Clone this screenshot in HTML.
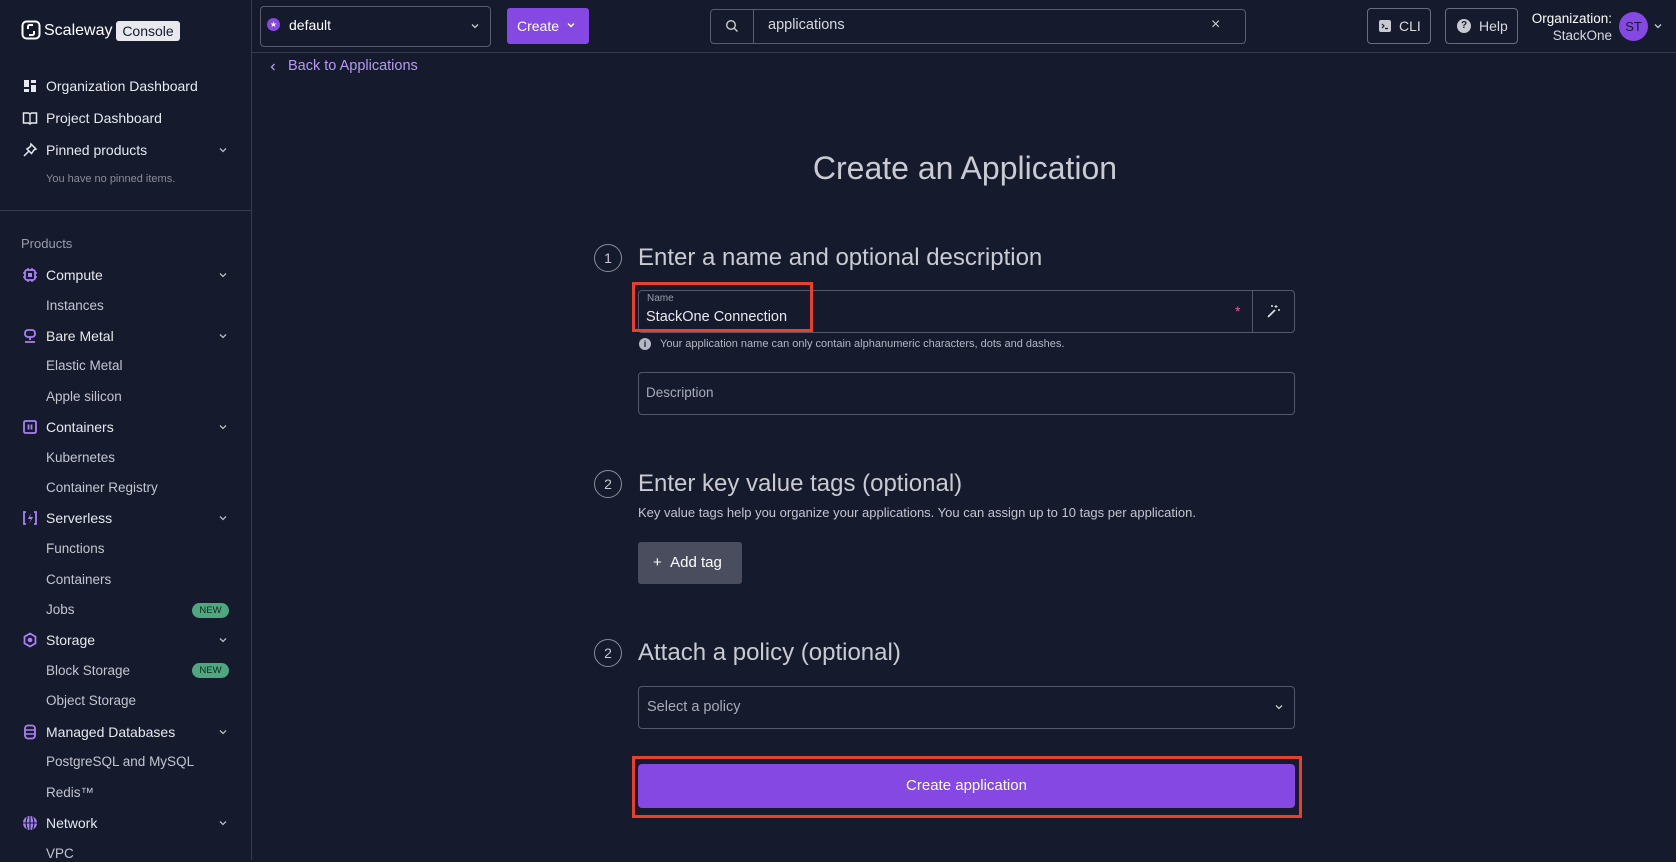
<!DOCTYPE html>
<html><head><meta charset="utf-8"><style>
*{box-sizing:border-box;margin:0;padding:0}
body{width:1676px;height:860px;background:#151a2d;font-family:"Liberation Sans",sans-serif;color:#e4e5ea;position:relative;overflow:hidden}
.a{position:absolute}
.side{left:0;top:0;width:252px;height:860px;border-right:1px solid #383b4f}
.ni{position:absolute;left:46px;font-size:14px;color:#e8e9ee;line-height:16px}
.sub{position:absolute;left:46px;font-size:13.5px;color:#c3c5cf;line-height:16px}
.ic{position:absolute;left:22px;width:16px;height:16px}
.chev{position:absolute;left:218px;width:10px;height:10px}
.new{position:absolute;left:192px;width:37px;height:15px;border-radius:8px;background:#4fa77f;color:#0f2a1e;font-size:9.5px;text-align:center;line-height:15px}
.box{position:absolute;border:1px solid #55586b;border-radius:4px}
.step{position:absolute;left:594px;width:28px;height:28px;border:1px solid #8a8c99;border-radius:50%;font-size:14px;color:#c8c9d1;text-align:center;line-height:26px}
.h{position:absolute;left:638px;font-size:24px;color:#c9cad2;line-height:26px;font-weight:300}
</style></head><body>
<div class="a side">
  <svg class="a" style="left:21px;top:20px" width="20" height="20" viewBox="0 0 20 20"><rect x="1.5" y="1.5" width="17" height="17" rx="4" fill="none" stroke="#fff" stroke-width="2"/><path d="M12 5H8.5a1.5 1.5 0 0 0-1.5 1.5V9M8 15h3.5a1.5 1.5 0 0 0 1.5-1.5V11" fill="none" stroke="#fff" stroke-width="2"/></svg>
  <div class="a" style="left:44px;top:21px;font-size:16px;color:#fff;line-height:20px">Scaleway</div>
  <div class="a" style="left:116px;top:21px;width:64px;background:#e8e9ee;color:#151a2d;border-radius:3px;font-size:14px;text-align:center;line-height:20px">Console</div>

  <svg class="ic" style="top:78px" viewBox="0 0 16 16"><rect x="2" y="2" width="5" height="7" fill="#e8e9ee"/><rect x="2" y="11" width="5" height="3" fill="#e8e9ee"/><rect x="9" y="2" width="5" height="3" fill="#e8e9ee"/><rect x="9" y="7" width="5" height="7" fill="#e8e9ee"/></svg>
  <div class="ni" style="top:78px">Organization Dashboard</div>
  <svg class="ic" style="top:110px" viewBox="0 0 16 16"><path d="M1.5 3h5l1.5 1 1.5-1h5v10h-5L8 14l-1.5-1h-5z" fill="none" stroke="#e8e9ee" stroke-width="1.5"/><path d="M8 4v10" stroke="#e8e9ee" stroke-width="1.3"/></svg>
  <div class="ni" style="top:110px">Project Dashboard</div>
  <svg class="ic" style="top:142px" viewBox="0 0 16 16"><path d="M9 2l5 5-2 1-2.5 3.5L5 7l3.5-2.5zM6.5 9.5L2 14" fill="none" stroke="#e8e9ee" stroke-width="1.5"/></svg>
  <div class="ni" style="top:142px">Pinned products</div>
  <svg class="chev" style="top:145px" viewBox="0 0 10 10"><path d="M2 3.5l3 3 3-3" fill="none" stroke="#bbb" stroke-width="1.3"/></svg>
  <div class="a" style="left:46px;top:173px;font-size:11px;color:#8a8c99">You have no pinned items.</div>
  <div class="a" style="left:0;top:210px;width:252px;border-top:1px solid #383b4f"></div>
  <div class="a" style="left:21px;top:236px;font-size:13px;color:#9b9dab">Products</div>

  <svg class="ic" style="top:267px" viewBox="0 0 16 16"><rect x="3" y="3" width="10" height="10" rx="2" fill="none" stroke="#a881f5" stroke-width="1.8"/><rect x="6" y="6" width="4" height="4" fill="#a881f5"/><path d="M6 1v2M10 1v2M6 13v2M10 13v2M1 6h2M1 10h2M13 6h2M13 10h2" stroke="#a881f5" stroke-width="1.5"/></svg>
  <div class="ni" style="top:267px">Compute</div>
  <svg class="chev" style="top:270px" viewBox="0 0 10 10"><path d="M2 3.5l3 3 3-3" fill="none" stroke="#bbb" stroke-width="1.3"/></svg>
  <div class="sub" style="top:298px">Instances</div>

  <svg class="ic" style="top:328px" viewBox="0 0 16 16"><rect x="3" y="2" width="10" height="7" rx="3" fill="none" stroke="#a881f5" stroke-width="1.8"/><path d="M8 9v3M3 14h10" stroke="#a881f5" stroke-width="1.8"/></svg>
  <div class="ni" style="top:328px">Bare Metal</div>
  <svg class="chev" style="top:331px" viewBox="0 0 10 10"><path d="M2 3.5l3 3 3-3" fill="none" stroke="#bbb" stroke-width="1.3"/></svg>
  <div class="sub" style="top:358px">Elastic Metal</div>
  <div class="sub" style="top:389px">Apple silicon</div>

  <svg class="ic" style="top:419px" viewBox="0 0 16 16"><rect x="2" y="2" width="12" height="12" rx="1.5" fill="none" stroke="#a881f5" stroke-width="1.8"/><path d="M6.5 5.5v5M9.5 5.5v5" stroke="#a881f5" stroke-width="1.8"/></svg>
  <div class="ni" style="top:419px">Containers</div>
  <svg class="chev" style="top:422px" viewBox="0 0 10 10"><path d="M2 3.5l3 3 3-3" fill="none" stroke="#bbb" stroke-width="1.3"/></svg>
  <div class="sub" style="top:450px">Kubernetes</div>
  <div class="sub" style="top:480px">Container Registry</div>

  <svg class="ic" style="top:510px" viewBox="0 0 16 16"><path d="M4 2H2v12h2M12 2h2v12h-2" fill="none" stroke="#a881f5" stroke-width="1.8"/><path d="M9 3L6 9h3l-2 5 4-7H8z" fill="#a881f5"/></svg>
  <div class="ni" style="top:510px">Serverless</div>
  <svg class="chev" style="top:513px" viewBox="0 0 10 10"><path d="M2 3.5l3 3 3-3" fill="none" stroke="#bbb" stroke-width="1.3"/></svg>
  <div class="sub" style="top:541px">Functions</div>
  <div class="sub" style="top:572px">Containers</div>
  <div class="sub" style="top:602px">Jobs</div>
  <div class="new" style="top:603px">NEW</div>

  <svg class="ic" style="top:632px" viewBox="0 0 16 16"><path d="M8 1.5l5.5 3.2v6.6L8 14.5l-5.5-3.2V4.7z" fill="none" stroke="#a881f5" stroke-width="1.8"/><circle cx="8" cy="8" r="2.3" fill="#a881f5"/></svg>
  <div class="ni" style="top:632px">Storage</div>
  <svg class="chev" style="top:635px" viewBox="0 0 10 10"><path d="M2 3.5l3 3 3-3" fill="none" stroke="#bbb" stroke-width="1.3"/></svg>
  <div class="sub" style="top:663px">Block Storage</div>
  <div class="new" style="top:663px">NEW</div>
  <div class="sub" style="top:693px">Object Storage</div>

  <svg class="ic" style="top:724px" viewBox="0 0 16 16"><rect x="3" y="1.5" width="10" height="13" rx="3" fill="none" stroke="#a881f5" stroke-width="1.8"/><path d="M3 6h10M3 10h10" stroke="#a881f5" stroke-width="1.5"/></svg>
  <div class="ni" style="top:724px">Managed Databases</div>
  <svg class="chev" style="top:727px" viewBox="0 0 10 10"><path d="M2 3.5l3 3 3-3" fill="none" stroke="#bbb" stroke-width="1.3"/></svg>
  <div class="sub" style="top:754px">PostgreSQL and MySQL</div>
  <div class="sub" style="top:785px">Redis™</div>

  <svg class="ic" style="top:815px" viewBox="0 0 16 16"><circle cx="8" cy="8" r="7" fill="#a881f5"/><path d="M1 8h14M8 1v14M5.5 1.8c-1.8 3.5-1.8 8.9 0 12.4M10.5 1.8c1.8 3.5 1.8 8.9 0 12.4" fill="none" stroke="#151a2d" stroke-width="1.1"/></svg>
  <div class="ni" style="top:815px">Network</div>
  <svg class="chev" style="top:818px" viewBox="0 0 10 10"><path d="M2 3.5l3 3 3-3" fill="none" stroke="#bbb" stroke-width="1.3"/></svg>
  <div class="sub" style="top:846px">VPC</div>
</div>

<!-- top bar -->
<div class="a" style="left:252px;top:52px;width:1424px;border-top:1px solid #383b4f"></div>
<div class="box" style="left:260px;top:6px;width:231px;height:41px;border-color:#5a5d70"></div>
<div class="a" style="left:267px;top:18px;width:13px;height:13px;border-radius:50%;background:#8548e3;color:#fff;font-size:8px;text-align:center;line-height:13px">★</div>
<div class="a" style="left:289px;top:17px;font-size:14px;color:#fff">default</div>
<svg class="a" style="left:470px;top:21px" width="10" height="10" viewBox="0 0 10 10"><path d="M2 3.5l3 3 3-3" fill="none" stroke="#ccc" stroke-width="1.3"/></svg>
<div class="a" style="left:507px;top:8px;width:82px;height:36px;background:#8548e3;border-radius:3px"></div>
<div class="a" style="left:517px;top:18px;font-size:14px;color:#fff">Create</div>
<svg class="a" style="left:566px;top:20px" width="10" height="10" viewBox="0 0 10 10"><path d="M2 3.5l3 3 3-3" fill="none" stroke="#fff" stroke-width="1.4"/></svg>
<div class="box" style="left:710px;top:9px;width:536px;height:35px;border-color:#5a5d70"></div>
<div class="a" style="left:753px;top:10px;height:33px;border-left:1px solid #5a5d70"></div>
<svg class="a" style="left:725px;top:19px" width="14" height="14" viewBox="0 0 14 14"><circle cx="6" cy="6" r="4.3" fill="none" stroke="#ccc" stroke-width="1.4"/><path d="M9.2 9.2L12.5 12.5" stroke="#ccc" stroke-width="1.4"/></svg>
<div class="a" style="left:768px;top:17px;font-size:14.5px;color:#d8d9df">applications</div>
<div class="a" style="left:1211px;top:16px;font-size:16px;color:#ccc">×</div>
<div class="box" style="left:1367px;top:8px;width:64px;height:36px;border-color:#6a6d80"></div>
<svg class="a" style="left:1379px;top:20px" width="12" height="12" viewBox="0 0 12 12"><rect width="12" height="12" rx="2" fill="#c8c9d1"/><path d="M3 4l2 2-2 2M6 8.5h3" stroke="#151a2d" stroke-width="1.2" fill="none"/></svg>
<div class="a" style="left:1399px;top:18px;font-size:14px;color:#d8d9df">CLI</div>
<div class="box" style="left:1445px;top:8px;width:73px;height:36px;border-color:#6a6d80"></div>
<div class="a" style="left:1457px;top:19px;width:14px;height:14px;border-radius:50%;background:#c8c9d1;color:#151a2d;font-size:10px;font-weight:bold;text-align:center;line-height:14px">?</div>
<div class="a" style="left:1479px;top:18px;font-size:14px;color:#d8d9df">Help</div>
<div class="a" style="left:1500px;top:10px;width:112px;text-align:right;font-size:13.5px;color:#fff;line-height:17px">Organization:<br><span style="color:#d8d9df">StackOne</span></div>
<div class="a" style="left:1619px;top:12px;width:29px;height:29px;border-radius:50%;background:#8548e3;color:#151a2d;font-size:13px;text-align:center;line-height:29px">ST</div>
<svg class="a" style="left:1653px;top:21px" width="10" height="10" viewBox="0 0 10 10"><path d="M2 3.5l3 3 3-3" fill="none" stroke="#ccc" stroke-width="1.3"/></svg>

<svg class="a" style="left:268px;top:62px" width="10" height="10" viewBox="0 0 10 10"><path d="M6.5 2L3.5 5l3 3" fill="none" stroke="#b79af0" stroke-width="1.3"/></svg>
<div class="a" style="left:288px;top:58px;font-size:14.5px;color:#b79af0">Back to Applications</div>

<div class="a" style="left:665px;top:150px;width:600px;text-align:center;font-size:32px;color:#c9cad2">Create an Application</div>

<div class="step" style="top:244px">1</div>
<div class="h" style="top:245px">Enter a name and optional description</div>
<div class="box" style="left:638px;top:290px;width:657px;height:43px"></div>
<div class="a" style="left:1252px;top:291px;height:41px;border-left:1px solid #55586b"></div>
<div class="a" style="left:647px;top:293px;font-size:10px;color:#9b9dab">Name</div>
<div class="a" style="left:646px;top:309px;font-size:14.5px;color:#e8e9ee">StackOne Connection</div>
<div class="a" style="left:1235px;top:303px;font-size:14px;color:#f05a9a">*</div>
<svg class="a" style="left:1265px;top:303px" width="16" height="16" viewBox="0 0 16 16"><path d="M3 14l7-7" stroke="#ddd" stroke-width="1.8"/><path d="M11 2v3M9.5 3.5h3M14 6v2M13 7h2M7 2v2M6 3h2" stroke="#ddd" stroke-width="1"/></svg>
<div class="a" style="left:632px;top:282px;width:181px;height:50px;border:3px solid #e8402a"></div>
<div class="a" style="left:639px;top:338px;width:12px;height:12px;border-radius:50%;background:#b5b7c2;color:#151a2d;font-size:9px;font-weight:bold;text-align:center;line-height:12px">i</div>
<div class="a" style="left:660px;top:338px;font-size:11px;color:#b5b7c2">Your application name can only contain alphanumeric characters, dots and dashes.</div>
<div class="box" style="left:638px;top:372px;width:657px;height:43px"></div>
<div class="a" style="left:646px;top:385px;font-size:13.5px;color:#a9abb8">Description</div>

<div class="step" style="top:470px">2</div>
<div class="h" style="top:471px">Enter key value tags (optional)</div>
<div class="a" style="left:638px;top:505px;font-size:13px;color:#c3c5cf">Key value tags help you organize your applications. You can assign up to 10 tags per application.</div>
<div class="a" style="left:638px;top:542px;width:104px;height:42px;background:#4a4d5e;border-radius:3px;color:#fff;font-size:15px;line-height:42px;padding-left:15px">+&nbsp;&nbsp;Add tag</div>

<div class="step" style="top:639px">2</div>
<div class="h" style="top:640px">Attach a policy (optional)</div>
<div class="box" style="left:638px;top:686px;width:657px;height:43px"></div>
<div class="a" style="left:647px;top:699px;font-size:14.5px;color:#a9abb8">Select a policy</div>
<svg class="a" style="left:1274px;top:702px" width="10" height="10" viewBox="0 0 10 10"><path d="M2 3.5l3 3 3-3" fill="none" stroke="#ccc" stroke-width="1.3"/></svg>

<div class="a" style="left:632px;top:756px;width:670px;height:62px;border:3px solid #e8402a"></div>
<div class="a" style="left:638px;top:764px;width:657px;height:44px;background:#8548e3;border-radius:4px;color:#fff;font-size:15px;text-align:center;line-height:44px">Create application</div>
</body></html>
